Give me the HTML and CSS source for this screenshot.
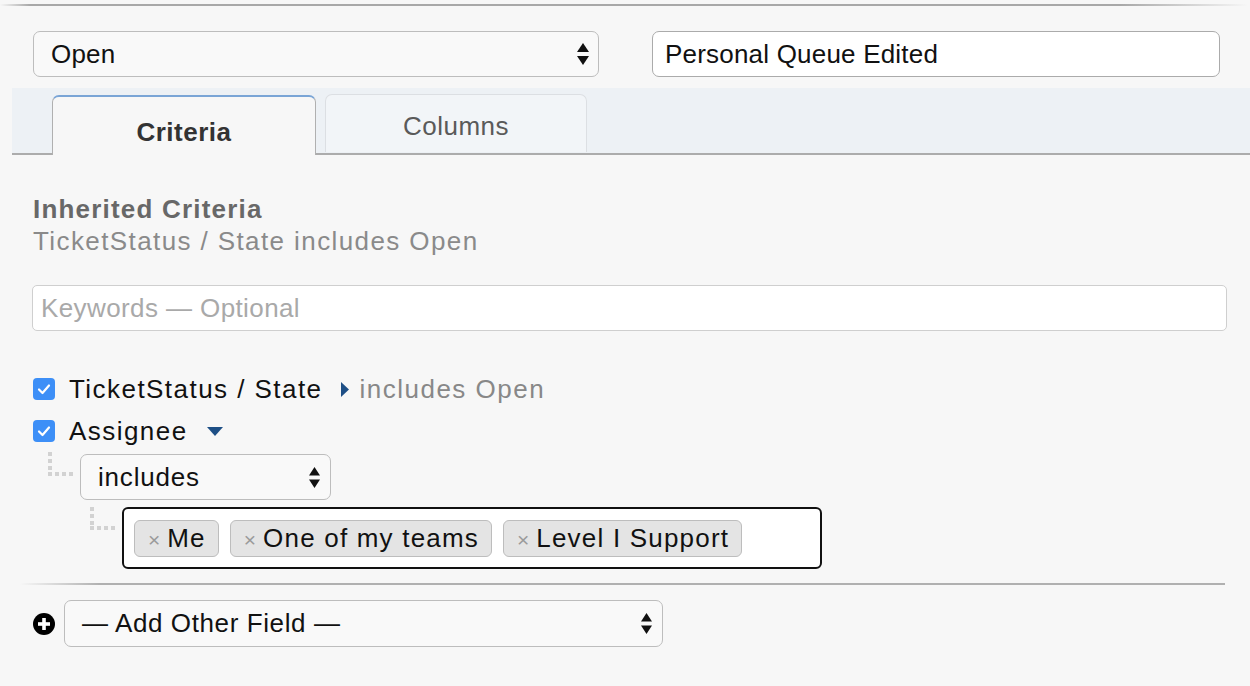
FILE: index.html
```html
<!DOCTYPE html>
<html>
<head>
<meta charset="utf-8">
<link rel="stylesheet" href="styles.css">
</head>
<body>
<div class="topline"></div>
<div class="header">
  <div class="select">
    <span class="select-text">Open</span>
    <svg class="arrows" width="12" height="22" viewBox="0 0 12 22"><polygon points="0,9 6,0 12,9"/><polygon points="0,13 12,13 6,22"/></svg>
  </div>
  <div class="textinput">Personal Queue Edited</div>
</div>
<div class="tabbar">
  <div class="tab active">Criteria</div>
  <div class="tab">Columns</div>
</div>
<div class="content">
  <div class="inherited">
    <div class="inh-title">Inherited Criteria</div>
    <div class="inh-sub">TicketStatus / State includes Open</div>
  </div>
  <div class="keywords">Keywords — Optional</div>
  <div class="crit-list">
    <div class="crit-row">
      <span class="cb"><svg width="22" height="22" viewBox="0 0 22 22"><path d="M6 11.5 L9.5 15 L16 7.5" fill="none" stroke="#fff" stroke-width="2.2" stroke-linecap="round" stroke-linejoin="round"/></svg></span>
      <span class="label">TicketStatus / State</span>
      <svg class="tri-right" width="8" height="15" viewBox="0 0 8 15"><polygon points="0,0 8,7.5 0,15"/></svg>
      <span class="summary">includes Open</span>
    </div>
    <div class="crit-row">
      <span class="cb"><svg width="22" height="22" viewBox="0 0 22 22"><path d="M6 11.5 L9.5 15 L16 7.5" fill="none" stroke="#fff" stroke-width="2.2" stroke-linecap="round" stroke-linejoin="round"/></svg></span>
      <span class="label">Assignee</span>
      <svg class="tri-down" width="16" height="9" viewBox="0 0 16 9"><polygon points="0,0 16,0 8,9"/></svg>
    </div>
    <div class="op-row">
      <div class="conn conn1"></div>
      <div class="select op">
        <span class="select-text">includes</span>
        <svg class="arrows" width="11" height="21" viewBox="0 0 11 21"><polygon points="0,8.5 5.5,0 11,8.5"/><polygon points="0,12.5 11,12.5 5.5,21"/></svg>
      </div>
    </div>
    <div class="val-row">
      <div class="conn conn2"></div>
      <div class="tagbox">
        <span class="tag"><span class="x">×</span>Me</span>
        <span class="tag"><span class="x">×</span>One of my teams</span>
        <span class="tag"><span class="x">×</span>Level I Support</span>
      </div>
    </div>
  </div>
  <div class="sep"></div>
  <div class="add-row">
    <svg class="plus" width="22" height="22" viewBox="0 0 22 22"><circle cx="11" cy="11" r="11" fill="#000"/><rect x="9.2" y="5" width="3.6" height="12" fill="#fff"/><rect x="5" y="9.2" width="12" height="3.6" fill="#fff"/></svg>
    <div class="select add">
      <span class="select-text">— Add Other Field —</span>
      <svg class="arrows" width="11" height="21" viewBox="0 0 11 21"><polygon points="0,8.5 5.5,0 11,8.5"/><polygon points="0,12.5 11,12.5 5.5,21"/></svg>
    </div>
  </div>
</div>
</body>
</html>
```
FILE: styles.css
```css
html, body {
  margin: 0;
  padding: 0;
}
body {
  width: 1250px;
  height: 686px;
  overflow: hidden;
  background: #f7f7f7;
  font-family: "Liberation Sans", Arial, sans-serif;
  font-size: 26px;
  color: #111;
}
.topline {
  margin-top: 4px;
  height: 2px;
  background: linear-gradient(to right, rgba(170,170,170,0) 0, #a8a8a8 30px, #a8a8a8 1120px, rgba(170,170,170,0) 1248px);
}
.header {
  display: grid;
  grid-template-columns: 566px 568px;
  column-gap: 53px;
  padding: 25px 0 0 33px;
}
.select {
  box-sizing: border-box;
  display: flex;
  align-items: center;
  justify-content: space-between;
  height: 46px;
  border: 1.5px solid #bdbdbd;
  border-radius: 7px;
  background: #f9f9f9;
  padding: 0 9px 0 17px;
  letter-spacing: 0.2px;
}
.arrows {
  fill: #111;
  display: block;
}
.textinput {
  box-sizing: border-box;
  height: 46px;
  display: flex;
  align-items: center;
  background: #fff;
  border: 1.5px solid #ababab;
  border-radius: 7px;
  padding-left: 12px;
  letter-spacing: 0.2px;
}
.tabbar {
  margin: 11px 0 0 12px;
  height: 67px;
  box-sizing: border-box;
  background: #edf1f5;
  border-bottom: 2px solid #acacac;
  display: flex;
  align-items: flex-end;
  padding-left: 40px;
  gap: 9px;
}
.tab {
  box-sizing: border-box;
  width: 262px;
  height: 58px;
  margin-bottom: 1px;
  border: 1px solid #dcdfe3;
  border-bottom: none;
  border-radius: 7px 7px 0 0;
  background: #f2f5f8;
  color: #5a5a5a;
  text-align: center;
  padding-top: 16px;
  letter-spacing: 0.5px;
}
.tab.active {
  width: 264px;
  height: 60px;
  margin-bottom: -2px;
  background: #f7f7f7;
  border: 1px solid #b0b0b0;
  border-top: 2px solid #7aa5d6;
  border-bottom: none;
  color: #333;
  font-weight: bold;
  padding-top: 20px;
}
.content {
  padding: 38px 23px 0 33px;
}
.inherited {
  line-height: 32px;
}
.inh-title {
  font-weight: bold;
  color: #686868;
  letter-spacing: 1.2px;
}
.inh-sub {
  color: #8a8a8a;
  letter-spacing: 1.4px;
}
.keywords {
  box-sizing: border-box;
  margin: 28px 0 0 -1px;
  height: 46px;
  display: flex;
  align-items: center;
  padding-left: 8px;
  background: #fff;
  border: 1.5px solid #cfcfcf;
  border-radius: 5px;
  color: #a9a9a9;
  letter-spacing: 0.4px;
}
.crit-list {
  margin-top: 37px;
}
.crit-row {
  display: flex;
  align-items: center;
  height: 42px;
}
.cb {
  width: 22px;
  height: 22px;
  border-radius: 4px;
  background: #3d8ff7;
  display: block;
  margin-right: 14px;
}
.cb svg {
  display: block;
}
.label {
  letter-spacing: 1.45px;
  color: #111;
}
.tri-right {
  fill: #1e4f86;
  margin: 0 10px 0 19px;
}
.tri-down {
  fill: #1e4f86;
  margin-left: 19px;
}
.summary {
  color: #888;
  letter-spacing: 1.5px;
}
.op-row {
  display: flex;
  align-items: flex-start;
  margin-top: 2px;
  padding-left: 15px;
}
.conn {
  box-sizing: border-box;
  background-image:
    repeating-linear-gradient(to bottom, #d2d2d2 0 4px, transparent 4px 7px),
    repeating-linear-gradient(to right, #d2d2d2 0 4px, transparent 4px 7px);
  background-repeat: no-repeat;
  background-size: 4px 100%, 100% 4px;
  background-position: left top, left bottom;
}
.conn1 {
  width: 25px;
  height: 24px;
  margin: -2px 7px 0 0;
}
.select.op {
  width: 251px;
  padding-left: 17px;
  padding-right: 10px;
  letter-spacing: 0.8px;
}
.val-row {
  display: flex;
  align-items: flex-start;
  margin-top: 7px;
  padding-left: 57px;
}
.conn2 {
  width: 25px;
  height: 23px;
  margin-right: 7px;
}
.tagbox {
  box-sizing: border-box;
  width: 700px;
  height: 62px;
  background: #fff;
  border: 2px solid #111;
  border-radius: 6px;
  display: flex;
  align-items: center;
  gap: 11px;
  padding-left: 10px;
}
.tag {
  box-sizing: border-box;
  height: 37px;
  display: flex;
  align-items: center;
  background: #e4e4e4;
  border: 1.5px solid #bdbdbd;
  border-radius: 6px;
  padding: 0 12px 0 13px;
  letter-spacing: 1.2px;
  color: #111;
}
.x {
  color: #9a9a9a;
  font-size: 21px;
  margin-right: 7px;
  position: relative;
  top: 2px;
  letter-spacing: 0;
}
.sep {
  margin: 14px 2px 0 -13px;
  height: 2px;
  background: linear-gradient(to right, rgba(170,170,170,0) 0, #b0b0b0 80px, #b0b0b0 100%);
}
.add-row {
  display: flex;
  align-items: center;
  margin-top: 15px;
  gap: 9px;
}
.plus {
  display: block;
}
.select.add {
  width: 599px;
  height: 47px;
  padding-left: 17px;
  padding-right: 10px;
  letter-spacing: 0.6px;
}
```
